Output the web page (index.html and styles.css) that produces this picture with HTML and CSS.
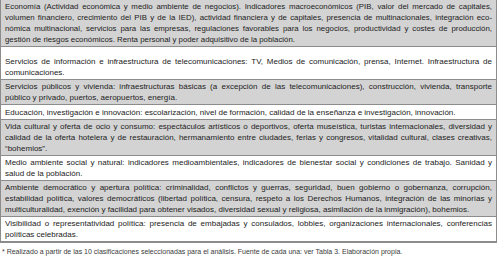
FILE: index.html
```html
<!DOCTYPE html>
<html lang="es">
<head>
<meta charset="utf-8">
<link rel="stylesheet" href="styles.css">
</head>
<body>
<div class="table">
  <div class="row gray">
    <span class="ln">Economía (Actividad económica y medio ambiente de negocios). Indicadores macroeconómicos (PIB, valor del mercado de capitales,</span>
    <span class="ln">volumen financiero, crecimiento del PIB y de la IED), actividad financiera y de capitales, presencia de multinacionales, integración eco-</span>
    <span class="ln">nómica multinacional, servicios para las empresas, regulaciones favorables para los negocios, productividad y costes de producción,</span>
    <span class="ln end">gestión de riesgos económicos. Renta personal y poder adquisitivo de la población.</span>
  </div>
  <div class="spacer"></div>
  <div class="row">Servicios de información e infraestructura de telecomunicaciones: TV, Medios de comunicación, prensa, Internet. Infraestructura de comunicaciones.</div>
  <div class="row gray">Servicios públicos y vivienda: infraestructuras básicas (a excepción de las telecomunicaciones), construcción, vivienda, transporte público y privado, puertos, aeropuertos, energía.</div>
  <div class="row single">Educación, investigación e innovación: escolarización, nivel de formación, calidad de la enseñanza e investigación, innovación.</div>
  <div class="row gray">Vida cultural y oferta de ocio y consumo: espectáculos artísticos o deportivos, oferta museística, turistas internacionales, diversidad y calidad de la oferta hotelera y de restauración, hermanamiento entre ciudades, ferias y congresos, vitalidad cultural, clases creativas, “bohemios”.</div>
  <div class="row">Medio ambiente social y natural: indicadores medioambientales, indicadores de bienestar social y condiciones de trabajo. Sanidad y salud de la población.</div>
  <div class="row gray">Ambiente democrático y apertura política: criminalidad, conflictos y guerras, seguridad, buen gobierno o gobernanza, corrupción, estabilidad política, valores democráticos (libertad política, censura, respeto a los Derechos Humanos, integración de las minorías y multiculturalidad, exención y facilidad para obtener visados, diversidad sexual y religiosa, asimilación de la inmigración), bohemios.</div>
  <div class="row">Visibilidad o representatividad política: presencia de embajadas y consulados, lobbies, organizaciones internacionales, conferencias políticas celebradas.</div>
</div>
<p class="note">* Realizado a partir de las 10 clasificaciones seleccionadas para el análisis. Fuente de cada una: ver Tabla 3. Elaboración propia.</p>
</body>
</html>
```
FILE: styles.css
```css
html, body {
  margin: 0;
  padding: 0;
  background: #ffffff;
}
body {
  font-family: "Liberation Sans", Arial, sans-serif;
  color: #222222;
}
.table {
  width: 497px;
  box-sizing: border-box;
  border: 1px solid #8c8c8c;
  border-top: none;
}
.row {
  font-size: 8px;
  line-height: 11px;
  padding: 1px 4px 1px 4px;
  text-align: justify;
  hyphens: manual;
  border-bottom: 1px solid #8c8c8c;
}
.row.gray {
  background: #d3d3d3;
}
.ln {
  display: block;
  white-space: nowrap;
  font-size: 7.85px;
  text-align: justify;
  text-align-last: justify;
}
.ln.end {
  text-align-last: left;
}
.row.single {
  padding-top: 2px;
}
.spacer {
  height: 8px;
}
.note {
  margin: 5px 0 0 2px;
  font-size: 7px;
  line-height: 8px;
  color: #3a3a3a;
}
```
